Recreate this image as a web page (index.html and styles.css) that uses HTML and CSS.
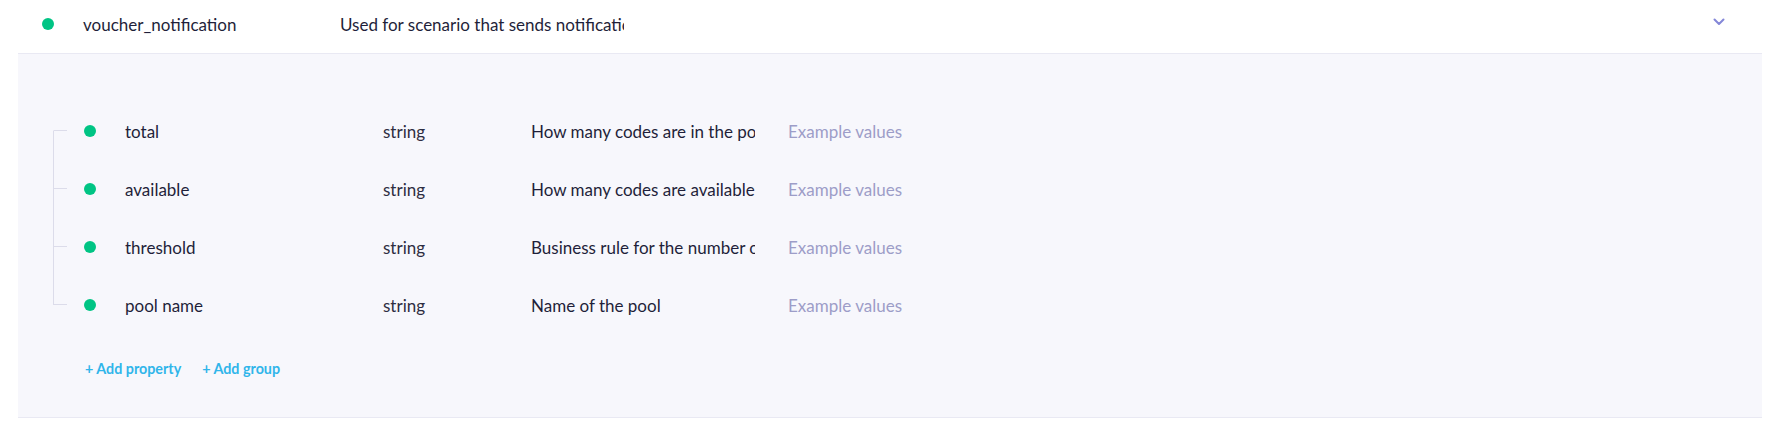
FILE: index.html
```html
<!DOCTYPE html>
<html lang="en">
<head>
<meta charset="utf-8">
<title>voucher_notification</title>
<link rel="stylesheet" href="styles.css">
</head>
<body>
<div class="event">
  <div class="event-header">
    <span class="dot"></span>
    <span class="event-name">voucher_notification</span>
    <span class="event-desc">Used for scenario that sends notification when voucher pool is running low</span>
    <svg class="chevron" width="12" height="8" viewBox="0 0 12 8" aria-hidden="true"><path d="M1.5 1.5 L6 6 L10.5 1.5" fill="none" stroke="#8487d8" stroke-width="2" stroke-linecap="round" stroke-linejoin="round"/></svg>
  </div>
  <div class="panel">
    <div class="props">
      <div class="prop first">
        <div class="branch"><span class="branch-top"></span><span class="branch-bottom"></span></div>
        <span class="dot"></span>
        <span class="prop-name">total</span>
        <span class="prop-type">string</span>
        <span class="prop-desc">How many codes are in the pool</span>
        <span class="prop-example">Example values</span>
      </div>
      <div class="prop">
        <div class="branch"><span class="branch-top"></span><span class="branch-bottom"></span></div>
        <span class="dot"></span>
        <span class="prop-name">available</span>
        <span class="prop-type">string</span>
        <span class="prop-desc">How many codes are available</span>
        <span class="prop-example">Example values</span>
      </div>
      <div class="prop">
        <div class="branch"><span class="branch-top"></span><span class="branch-bottom"></span></div>
        <span class="dot"></span>
        <span class="prop-name">threshold</span>
        <span class="prop-type">string</span>
        <span class="prop-desc">Business rule for the number of codes</span>
        <span class="prop-example">Example values</span>
      </div>
      <div class="prop last">
        <div class="branch"><span class="branch-top"></span><span class="branch-bottom"></span></div>
        <span class="dot"></span>
        <span class="prop-name">pool name</span>
        <span class="prop-type">string</span>
        <span class="prop-desc">Name of the pool</span>
        <span class="prop-example">Example values</span>
      </div>
    </div>
    <div class="actions">
      <a class="action" href="#">+ Add property</a>
      <a class="action" href="#">+ Add group</a>
    </div>
  </div>
</div>
</body>
</html>
```
FILE: styles.css
```css
* { box-sizing: border-box; }

html, body {
  margin: 0;
  padding: 0;
  background: #ffffff;
}

body {
  font-family: Lato, "Open Sans", Arial, sans-serif;
  color: #1f1f3a;
  font-size: 17px;
}

.event {
  margin-left: 18px;
  width: 1744px;
}

.event-header {
  display: flex;
  align-items: center;
  height: 53px;
  padding: 0 37px 5px 24px;
}

.dot {
  flex: none;
  width: 12px;
  height: 12px;
  border-radius: 50%;
  background: #00c484;
}

.event-name {
  flex: none;
  width: 257px;
  margin-left: 29px;
  white-space: nowrap;
}

.event-desc {
  flex: none;
  width: 284px;
  overflow: hidden;
  white-space: nowrap;
}

.chevron {
  margin-left: auto;
  margin-top: -4px;
}

.panel {
  background: #f7f7fc;
  border-top: 1px solid #e9e9f3;
  border-bottom: 1px solid #e9e9f3;
  padding: 48px 0 38px 35px;
  height: 365px;
}

.props {
  display: flex;
  flex-direction: column;
}

.prop {
  display: flex;
  align-items: center;
  height: 58px;
}

.branch {
  flex: none;
  align-self: stretch;
  width: 14px;
  display: flex;
  flex-direction: column;
}

.branch-top {
  flex: none;
  height: 29px;
  border-left: 1px solid #dcdcea;
  border-bottom: 1px solid #dcdcea;
}

.branch-bottom {
  flex: 1;
  border-left: 1px solid #dcdcea;
}

.prop.first .branch-top { border-left-color: transparent; }
.prop.last .branch-bottom { border-left-color: transparent; }

.prop .dot {
  margin-left: 17px;
}

.prop-name {
  flex: none;
  width: 258px;
  margin-left: 29px;
  white-space: nowrap;
}

.prop-type {
  flex: none;
  width: 148px;
  color: #2e2e42;
}

.prop-desc {
  flex: none;
  width: 224px;
  margin-right: 33px;
  overflow: hidden;
  white-space: nowrap;
}

.prop-example {
  color: #9d9dc8;
  white-space: nowrap;
}

.actions {
  display: flex;
  gap: 21px;
  margin-top: 26px;
  padding-left: 32px;
  line-height: 18px;
}

.action {
  font-size: 14.3px;
  font-weight: 700;
  color: #30b5ea;
  text-decoration: none;
}
```
